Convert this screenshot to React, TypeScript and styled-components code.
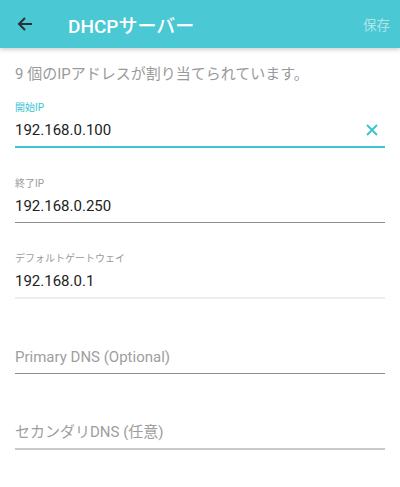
import React from "react";
import styled, { createGlobalStyle } from "styled-components";

const Global = createGlobalStyle`
  html, body { margin: 0; padding: 0; background: #ffffff; }
  body { font-family: Roboto, "Noto Sans CJK JP", sans-serif; }
`;

const Page = styled.div`
  width: 400px;
  min-height: 487px;
  background: #fff;
`;

const Header = styled.header`
  height: 48px;
  background: #4ac8d4;
  display: flex;
  align-items: center;
  box-shadow: 0 2px 4px rgba(0,0,0,0.18);
  position: relative;
`;

const BackBtn = styled.div`
  width: 68px;
  padding-left: 17px;
  box-sizing: border-box;
  display: flex;
  align-items: center;
`;

const Title = styled.div`
  flex: 1;
  color: #fff;
  font-size: 19px;
  font-weight: 500;
  font-family: Roboto, "Noto Sans CJK JP", sans-serif;
`;

const Save = styled.div`
  color: rgba(255,255,255,0.55);
  font-size: 13.5px;
  padding-right: 10px;
  font-family: "Noto Sans CJK JP", sans-serif;
`;

const Body = styled.div`
  padding: 16px 15px 0 15px;
  display: flex;
  flex-direction: column;
  gap: 29px;
`;

const Info = styled.div`
  font-size: 15px;
  line-height: 20px;
  color: #9a9a9a;
  height: 20px;
  margin-bottom: -12px;
`;

const Field = styled.div<{ $line: string; $w: number }>`
  display: flex;
  flex-direction: column;
  border-bottom: ${(p) => p.$w}px solid ${(p) => p.$line};
  padding-bottom: 5px;
`;

const Label = styled.div<{ $active?: boolean }>`
  height: 14px;
  line-height: 14px;
  font-size: 10px;
  color: ${(p) => (p.$active ? "#3cc5d1" : "#9a9a9a")};
  margin-bottom: 4px;
`;

const ValueRow = styled.div`
  height: 22px;
  display: flex;
  align-items: center;
  justify-content: space-between;
`;

const Value = styled.div<{ $placeholder?: boolean }>`
  font-size: 15px;
  line-height: 22px;
  color: ${(p) => (p.$placeholder ? "#9e9e9e" : "#222222")};
`;

const Clear = styled.div`
  width: 14px;
  height: 14px;
  margin-right: 6px;
  display: flex;
`;

type F = { label?: string; value: string; placeholder?: boolean; active?: boolean; line: string; w: number };

const fields: F[] = [
  { label: "開始IP", value: "192.168.0.100", active: true, line: "#3cc5d1", w: 2 },
  { label: "終了IP", value: "192.168.0.250", line: "#8e8e8e", w: 1 },
  { label: "デフォルトゲートウェイ", value: "192.168.0.1", line: "#eeeeee", w: 2 },
  { value: "Primary DNS (Optional)", placeholder: true, line: "#8e8e8e", w: 1 },
  { value: "セカンダリDNS (任意)", placeholder: true, line: "#c9c9c9", w: 2 },
];

export default function App() {
  return (
    <Page>
      <Global />
      <Header>
        <BackBtn>
          <svg width="16" height="16" viewBox="0 0 16 16">
            <path d="M15 8H2M8 2L2 8l6 6" stroke="#263238" strokeWidth="2" fill="none" />
          </svg>
        </BackBtn>
        <Title>DHCPサーバー</Title>
        <Save>保存</Save>
      </Header>
      <Body>
        <Info>9 個のIPアドレスが割り当てられています。</Info>
        {fields.map((f, i) => (
          <Field key={i} $line={f.line} $w={f.w}>
            <Label $active={f.active}>{f.label ?? ""}</Label>
            <ValueRow>
              <Value $placeholder={f.placeholder}>{f.value}</Value>
              {f.active && (
                <Clear>
                  <svg width="14" height="14" viewBox="0 0 14 14">
                    <path d="M2 2L12 12M12 2L2 12" stroke="#3cc5d1" strokeWidth="2" fill="none" />
                  </svg>
                </Clear>
              )}
            </ValueRow>
          </Field>
        ))}
      </Body>
    </Page>
  );
}
